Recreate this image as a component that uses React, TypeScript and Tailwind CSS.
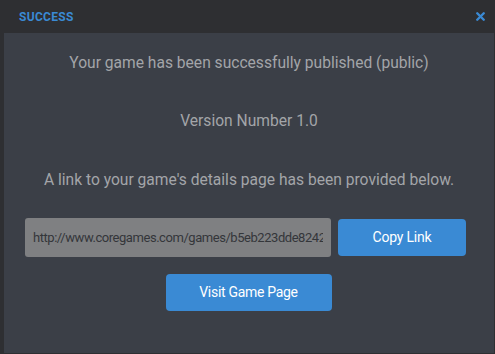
import { X } from 'lucide-react';

export default function App() {
  const gameUrl = 'http://www.coregames.com/games/b5eb223dde8242908b1d4a16e7f3c2a1';

  return (
    <div className="w-[495px] h-[354px] bg-[#2e2f32] flex flex-col font-['Roboto',sans-serif] overflow-hidden">
      {/* Header */}
      <div className="h-[33px] flex items-center justify-between pl-[19px] pr-[8px]">
        <span className="text-[12px] font-bold text-[#3a8ad4] tracking-[0.3px]">SUCCESS</span>
        <X className="w-[13px] h-[13px] text-[#3a8ad4]" strokeWidth={4.5} />
      </div>

      {/* Body */}
      <div className="ml-[4px] mr-[1px] mb-[1px] flex-1 bg-[#3b3f47] flex flex-col items-center">
        <p className="mt-[19px] text-[15.6px] text-[#a3a5a9] leading-[22px]">
          Your game has been successfully published (public)
        </p>
        <p className="mt-[36px] text-[15.6px] text-[#a3a5a9] leading-[22px]">Version Number 1.0</p>
        <p className="mt-[37px] text-[15.6px] text-[#a3a5a9] leading-[22px]">
          A link to your game's details page has been provided below.
        </p>

        <div className="mt-[27px] w-full flex items-center pl-[21px] gap-[7px]">
          <input
            type="text"
            value={gameUrl}
            readOnly
            className="w-[306px] h-[39px] bg-[#7f8082] rounded-[3px] px-[8px] text-[13px] tracking-[-0.45px] text-[#34363a] outline-none"
          />
          <button className="w-[128px] h-[37px] bg-[#3a8ad4] rounded-[4px] text-white text-[14px] tracking-[-0.2px]">
            Copy Link
          </button>
        </div>

        <button className="mt-[17px] ml-[-1px] w-[166px] h-[37px] bg-[#3a8ad4] rounded-[4px] text-white text-[14px] tracking-[-0.3px]">
          Visit Game Page
        </button>
      </div>
    </div>
  );
}
